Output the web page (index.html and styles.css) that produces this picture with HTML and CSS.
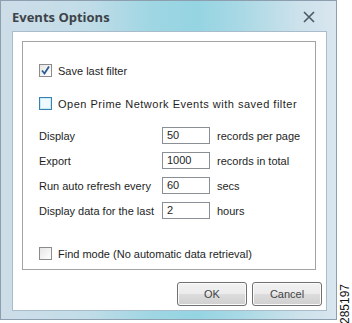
FILE: index.html
```html
<!DOCTYPE html>
<html lang="en">
<head>
    <meta charset="UTF-8">
    <title>Events Options</title>
    <link rel="stylesheet" href="styles.css">
</head>
<body>
  <div class="page">
    <div class="window">
      <div class="titlebar">
        <span class="title">Events Options</span>
        <svg class="close" width="12" height="12" viewBox="0 0 12 12">
          <path d="M1 1 L11 11 M11 1 L1 11" stroke="#4b5a66" stroke-width="1.6" fill="none"/>
        </svg>
      </div>

      <div class="client">
        <div class="group">
          <div class="check">
            <span class="box checked">
              <svg width="11" height="11" viewBox="0 0 11 11">
                <path d="M2 5.5 L4.5 8.5 L9 1.5" stroke="#2b5d92" stroke-width="1.8" fill="none"/>
              </svg>
            </span>
            Save last filter
          </div>
          <div class="check second">
            <span class="box focus"></span>
            <span class="wide">Open Prime Network Events with saved filter</span>
          </div>

          <div class="fields">
            <span>Display</span><span class="field">50</span><span class="unit">records per page</span>
            <span>Export</span><span class="field">1000</span><span class="unit">records in total</span>
            <span>Run auto refresh every</span><span class="field">60</span><span class="unit">secs</span>
            <span>Display data for the last</span><span class="field">2</span><span class="unit">hours</span>
          </div>

          <div class="check last">
            <span class="box"></span>
            Find mode (No automatic data retrieval)
          </div>
        </div>

        <div class="buttons">
          <button class="btn">OK</button>
          <button class="btn">Cancel</button>
        </div>
      </div>
    </div>

    <div class="side">
      <span class="figno">285197</span>
    </div>
  </div>
</body>
</html>
```

FILE: styles.css
```css
body {
    margin: 0;
    background: #fff;
    font-family: "Liberation Sans", Arial, sans-serif;
    font-size: 11px;
    color: #1e1e1e;
}

.page {
    display: flex;
    width: 352px;
    height: 323px;
}

/* outer aero frame */
.window {
    width: 337px;
    height: 320px;
    box-sizing: border-box;
    border: 1px solid #8d9fae;
    background: linear-gradient(90deg, #cddde8 0%, #c2dde8 25%, #9fd6e3 45%, #95d4e2 58%, #a9d9e5 72%, #cbe1eb 88%, #d9e6ef 100%);
}

.titlebar {
    height: 30px;
    display: flex;
    align-items: center;
    padding: 0 11px;
}

.title {
    flex: 1;
    font-family: "Open Sans", "Noto Sans", sans-serif;
    font-weight: 700;
    font-size: 13px;
    color: #3d4348;
    margin-top: 2px;
}

.close {
    margin-right: 10px;
    margin-top: 2px;
}

.client {
    margin-left: 11px;
    width: 315px;
    height: 280px;
    box-sizing: border-box;
    border: 1px solid #a9bccb;
    background: #fff;
    padding: 9px 0 0 9px;
}

.group {
    width: 294px;
    box-sizing: border-box;
    border: 1px solid #a3a3a3;
    padding: 22px 0 9px 16px;
}

.check {
    display: flex;
    align-items: center;
    height: 13px;
}

.check.second {
    margin-top: 20px;
}

.check.last {
    margin-top: 28px;
}

.wide {
    letter-spacing: 0.5px;
}

.box {
    width: 13px;
    height: 13px;
    box-sizing: border-box;
    border: 1px solid #8b8b8b;
    background: linear-gradient(135deg, #e6e6e6, #fff);
    margin-right: 6px;
    display: flex;
    align-items: center;
    justify-content: center;
}

.box.focus {
    border-color: #3c7fb1;
    box-shadow: inset 0 0 0 1px #c6eaf6;
    background: #eefaff;
}

.fields {
    display: grid;
    grid-template-columns: 123px 48px auto;
    grid-auto-rows: 17px;
    row-gap: 8px;
    align-items: center;
    margin-top: 17px;
}

.field {
    height: 17px;
    box-sizing: border-box;
    border: 1px solid #8a8f96;
    padding-left: 4px;
    line-height: 15px;
}

.unit {
    margin-left: 7px;
}

.buttons {
    display: flex;
    justify-content: flex-end;
    gap: 5px;
    margin-top: 12px;
    padding-right: 4px;
}

.btn {
    width: 70px;
    height: 24px;
    border: 1px solid #707070;
    border-radius: 3px;
    background: linear-gradient(#f2f2f2 0%, #ebebeb 50%, #dddddd 50%, #cfcfcf 100%);
    box-shadow: inset 0 0 0 1px #fbfbfb;
    font-family: "Liberation Sans", Arial, sans-serif;
    font-size: 11px;
    color: #444;
    padding: 0;
}

.side {
    flex: 1;
    display: flex;
    align-items: flex-end;
    justify-content: center;
}

.figno {
    writing-mode: vertical-rl;
    transform: rotate(180deg);
    font-size: 12px;
    color: #111;
    margin-bottom: -1px;
    line-height: 10px;
}
```
